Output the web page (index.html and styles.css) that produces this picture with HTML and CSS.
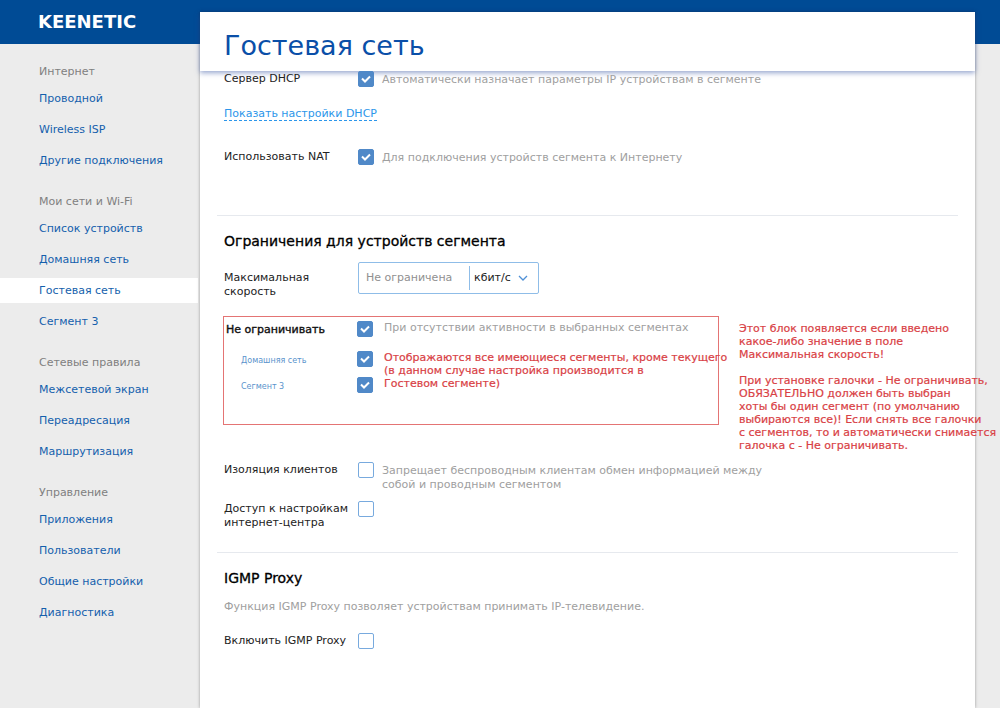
FILE: index.html
```html
<!DOCTYPE html>
<html lang="ru">
<head>
<meta charset="utf-8">
<title>Гостевая сеть</title>
<link rel="stylesheet" href="styles.css">
</head>
<body>
<div class="page">
  <aside class="sidebar">
    <div class="logo">KEENETIC</div>
    <nav class="nav">
      <section class="nav-group">
        <h2 class="nav-title">Интернет</h2>
        <a class="nav-link" href="#">Проводной</a>
        <a class="nav-link" href="#">Wireless ISP</a>
        <a class="nav-link" href="#">Другие подключения</a>
      </section>
      <section class="nav-group">
        <h2 class="nav-title">Мои сети и Wi-Fi</h2>
        <a class="nav-link" href="#">Список устройств</a>
        <a class="nav-link" href="#">Домашняя сеть</a>
        <a class="nav-link active" href="#">Гостевая сеть</a>
        <a class="nav-link" href="#">Сегмент 3</a>
      </section>
      <section class="nav-group">
        <h2 class="nav-title">Сетевые правила</h2>
        <a class="nav-link" href="#">Межсетевой экран</a>
        <a class="nav-link" href="#">Переадресация</a>
        <a class="nav-link" href="#">Маршрутизация</a>
      </section>
      <section class="nav-group">
        <h2 class="nav-title">Управление</h2>
        <a class="nav-link" href="#">Приложения</a>
        <a class="nav-link" href="#">Пользователи</a>
        <a class="nav-link" href="#">Общие настройки</a>
        <a class="nav-link" href="#">Диагностика</a>
      </section>
    </nav>
  </aside>
  <main class="panel">
    <header class="panel-head"><h1 class="title">Гостевая сеть</h1></header>
    <section class="section section-network">
      <div class="row">
        <label class="label" for="dhcp">Сервер DHCP</label>
        <input class="check" type="checkbox" id="dhcp" checked>
        <span class="hint">Автоматически назначает параметры IP устройствам в сегменте</span>
      </div>
      <div><a class="more" href="#">Показать настройки DHCP</a></div>
      <div class="row nat-row">
        <label class="label" for="nat">Использовать NAT</label>
        <input class="check" type="checkbox" id="nat" checked>
        <span class="hint">Для подключения устройств сегмента к Интернету</span>
      </div>
    </section>
    <section class="section section-limits">
      <h2 class="heading">Ограничения для устройств сегмента</h2>
      <div class="speed-row">
        <label class="label" for="speed">Максимальная скорость</label>
        <div class="field">
          <input class="field-input" type="text" id="speed" placeholder="Не ограничена">
          <select class="field-unit" aria-label="Единица скорости"><option>кбит/с</option></select>
        </div>
      </div>
      <div class="exempt">
        <div class="exempt-box">
          <div class="row exempt-main">
            <label class="label strong" for="exempt">Не ограничивать</label>
            <input class="check" type="checkbox" id="exempt" checked>
            <span class="hint">При отсутствии активности в выбранных сегментах</span>
          </div>
          <div class="exempt-body">
            <div class="segments">
              <div class="segment">
                <label class="segment-label" for="seg-home">Домашняя сеть</label>
                <input class="check" type="checkbox" id="seg-home" checked>
              </div>
              <div class="segment">
                <label class="segment-label" for="seg-3">Сегмент 3</label>
                <input class="check" type="checkbox" id="seg-3" checked>
              </div>
            </div>
            <p class="note">Отображаются все имеющиеся сегменты, кроме текущего<br>(в данном случае настройка производится в<br>Гостевом сегменте)</p>
          </div>
        </div>
        <div class="note side-note">
          <p>Этот блок появляется если введено<br>какое-либо значение в поле<br>Максимальная скорость!</p>
          <p>При установке галочки - Не ограничивать,<br>ОБЯЗАТЕЛЬНО должен быть выбран<br>хоты бы один сегмент (по умолчанию<br>выбираются все)! Если снять все галочки<br>с сегментов, то и автоматически снимается<br>галочка с - Не ограничивать.</p>
        </div>
      </div>
      <div class="row">
        <label class="label" for="isolation">Изоляция клиентов</label>
        <input class="check" type="checkbox" id="isolation">
        <span class="hint">Запрещает беспроводным клиентам обмен информацией между<br>собой и проводным сегментом</span>
      </div>
      <div class="row access-row">
        <label class="label" for="access">Доступ к настройкам интернет-центра</label>
        <input class="check" type="checkbox" id="access">
      </div>
    </section>
    <section class="section section-igmp">
      <h2 class="heading">IGMP Proxy</h2>
      <p class="hint igmp-text">Функция IGMP Proxy позволяет устройствам принимать IP-телевидение.</p>
      <div class="row">
        <label class="label" for="igmp">Включить IGMP Proxy</label>
        <input class="check" type="checkbox" id="igmp">
      </div>
    </section>
  </main>
</div>
</body>
</html>
```
FILE: styles.css
```css
* { box-sizing: border-box; }
body, h1, h2, p { margin: 0; }
body {
  font: 11px/14px Verdana, "DejaVu Sans", sans-serif;
  color: #222;
  background: #ececec;
}
a { text-decoration: none; }

.page {
  display: grid;
  grid-template-columns: 200px minmax(0, 1fr);
  min-height: 100vh;
  padding-right: 25px;
  background: linear-gradient(#004b95 44px, #ececec 44px);
}

/* Sidebar */
.logo {
  height: 44px;
  padding-left: 38px;
  color: #fff;
  font-size: 18px;
  font-weight: bold;
  line-height: 43px;
}
.nav { padding: 21px 2px 0 0; }
.nav-group { display: flex; flex-direction: column; gap: 6px; margin-bottom: 22px; }
.nav-title { padding: 0 0 1px 39px; font-size: 11px; font-weight: normal; color: #808080; }
.nav-link { padding-left: 39px; line-height: 25px; color: #145fac; }
.nav-link.active { background: #fff; }

/* Main panel */
.panel {
  margin-top: 12px;
  background: #fff;
  box-shadow: 0 0 3px rgba(0, 0, 0, 0.35);
}
.panel-head {
  height: 59px;
  padding-left: 24px;
  box-shadow: 0 2px 5px rgba(50, 80, 160, 0.5);
}
.title { font-size: 27px; font-weight: normal; line-height: 68px; color: #0a4fa8; }

.section { margin: 0 17px; padding: 0 7px; }
.section + .section { border-top: 1px solid #e6e9ee; }
.heading { font-size: 14px; line-height: 18px; font-weight: normal; color: #000; -webkit-text-stroke: 0.3px #000; }

.row { display: grid; grid-template-columns: 134px 16px minmax(0, 1fr); align-items: start; }
.label { padding: 1px 0; }
.hint { padding: 2px 0 0 8px; color: #a0a0a0; }
.strong { color: #111; -webkit-text-stroke: 0.4px #111; }

.check {
  appearance: none;
  width: 16px;
  height: 16px;
  margin: 0;
  border: 1px solid #78aade;
  border-radius: 2px;
  background: #fff;
}
.check:checked {
  border-color: #5089c8;
  background: #5089c8 url("data:image/svg+xml,%3Csvg xmlns='http://www.w3.org/2000/svg' viewBox='0 0 14 14'%3E%3Cpath d='M3 6.5 6 9.5 11 4.5' fill='none' stroke='white' stroke-width='2'/%3E%3C/svg%3E");
}

.section-network { display: flex; flex-direction: column; gap: 20px; padding-bottom: 50px; }
.nat-row { margin-top: 8px; }
.more { color: #2c96ea; border-bottom: 1px dashed #2c96ea; }

.section-limits { padding-top: 16px; padding-bottom: 21px; }
.speed-row { display: grid; grid-template-columns: 134px 181px; margin-top: 12px; }
.speed-row .label { padding: 9px 30px 0 0; }
.field { display: flex; align-items: center; height: 32px; border: 1px solid #8fbde8; border-radius: 2px; }
.field-input, .field-unit { border: 0; margin: 0; background: transparent; font: inherit; outline: 0; }
.field-input { flex: 1; min-width: 0; padding: 0 7px; color: #222; }
.field-input::placeholder { color: #909090; opacity: 1; }
.field-unit {
  appearance: none;
  width: 69px;
  height: 24px;
  padding: 0 0 0 4px;
  border-left: 1px solid #8fbde8;
  color: #222;
  background: url("data:image/svg+xml,%3Csvg xmlns='http://www.w3.org/2000/svg' width='10' height='6'%3E%3Cpath d='M1 1 5 5 9 1' fill='none' stroke='%234f90d6' stroke-width='1.3'/%3E%3C/svg%3E") no-repeat right 10px center;
}

.exempt { position: relative; margin: 17px 0 37px; }
.exempt-box { max-width: 496px; min-height: 109px; margin-left: -1px; padding: 4px 0 0 2px; border: 1px solid #e47474; }
.exempt-main { grid-template-columns: 131px 16px minmax(0, 1fr); }
.exempt-main .hint { padding: 0 0 0 11px; }
.exempt-main .label { padding-top: 2px; }
.exempt-body { display: flex; gap: 11px; padding: 13px 0 0 15px; }
.segments { display: flex; flex-direction: column; gap: 10px; }
.segment { display: grid; grid-template-columns: 116px 16px; }
.segment-label { padding-top: 4px; font-size: 8px; line-height: 12px; color: #5a93cc; }
.note { color: #d94145; line-height: 13px; white-space: nowrap; -webkit-text-stroke: 0.2px #d94145; }
.side-note { position: absolute; top: 6px; left: 515px; display: grid; gap: 13px; }

.access-row { margin-top: 9px; }

.section-igmp { padding-top: 16px; }
.igmp-text { padding: 0; margin: 13px 0 19px; }
```
